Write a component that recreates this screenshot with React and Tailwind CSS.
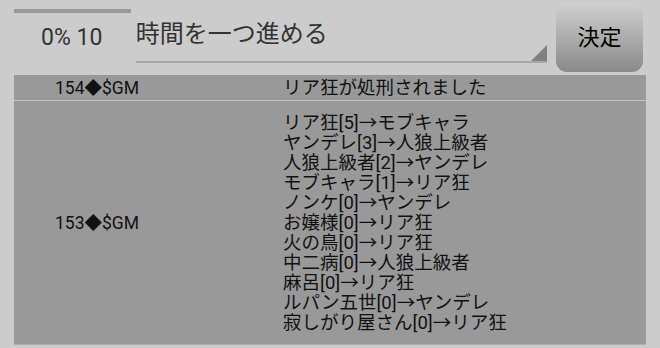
import React from 'react';

const logs = [
  { id: '154◆$GM', lines: ['リア狂が処刑されました'] },
  {
    id: '153◆$GM',
    lines: [
      'リア狂[5]→モブキャラ',
      'ヤンデレ[3]→人狼上級者',
      '人狼上級者[2]→ヤンデレ',
      'モブキャラ[1]→リア狂',
      'ノンケ[0]→ヤンデレ',
      'お嬢様[0]→リア狂',
      '火の鳥[0]→リア狂',
      '中二病[0]→人狼上級者',
      '麻呂[0]→リア狂',
      'ルパン五世[0]→ヤンデレ',
      '寂しがり屋さん[0]→リア狂',
    ],
  },
];

export default function App() {
  return (
    <div
      className="w-[660px] h-[348px] overflow-hidden bg-[#cccccc] text-[#111]"
      style={{ fontFamily: "Roboto, 'Noto Sans CJK JP', sans-serif" }}
    >
      {/* top bar */}
      <div className="flex h-[75px] pl-[14px] pr-[17px]">
        <div className="w-[117px] pt-[9px]">
          <div className="h-[4px] bg-[#999999]" />
          <div className="pt-[11px] pl-[27px] text-[23px] leading-[28px] text-[#333]">0% 10</div>
        </div>
        <div className="relative ml-[5px] w-[412px] h-[63px] border-b-2 border-[#a8a8a8]">
          <div className="pt-[19px] text-[24px] leading-[30px] text-[#333]">時間を一つ進める</div>
          <div className="absolute right-0 bottom-0 w-0 h-0 border-l-[16px] border-l-transparent border-b-[16px] border-b-[#808080]" />
        </div>
        <button className="ml-[9px] mt-[3px] w-[87px] h-[69px] rounded-[11px] bg-gradient-to-b from-[#d0d0d0] to-[#8a8a8a] text-[22px] text-black">
          決定
        </button>
      </div>

      {/* log table */}
      <div className="ml-[14px] w-[632px] bg-[#999999] border-b border-[#b0b0b0]">
        {logs.map((row, i) => (
          <div
            key={row.id}
            className={`flex items-center ${i > 0 ? 'border-t border-[#c2c2c2]' : ''} ${i === 0 ? 'h-[25px]' : 'py-[1px] h-[244px]'}`}
          >
            <div className="w-[269px] pl-[41px] text-[17.5px] leading-[20px]">{row.id}</div>
            <div className="text-[18.5px] leading-[20px]">
              {row.lines.map((l) => (
                <div key={l}>{l}</div>
              ))}
            </div>
          </div>
        ))}
      </div>
    </div>
  );
}
